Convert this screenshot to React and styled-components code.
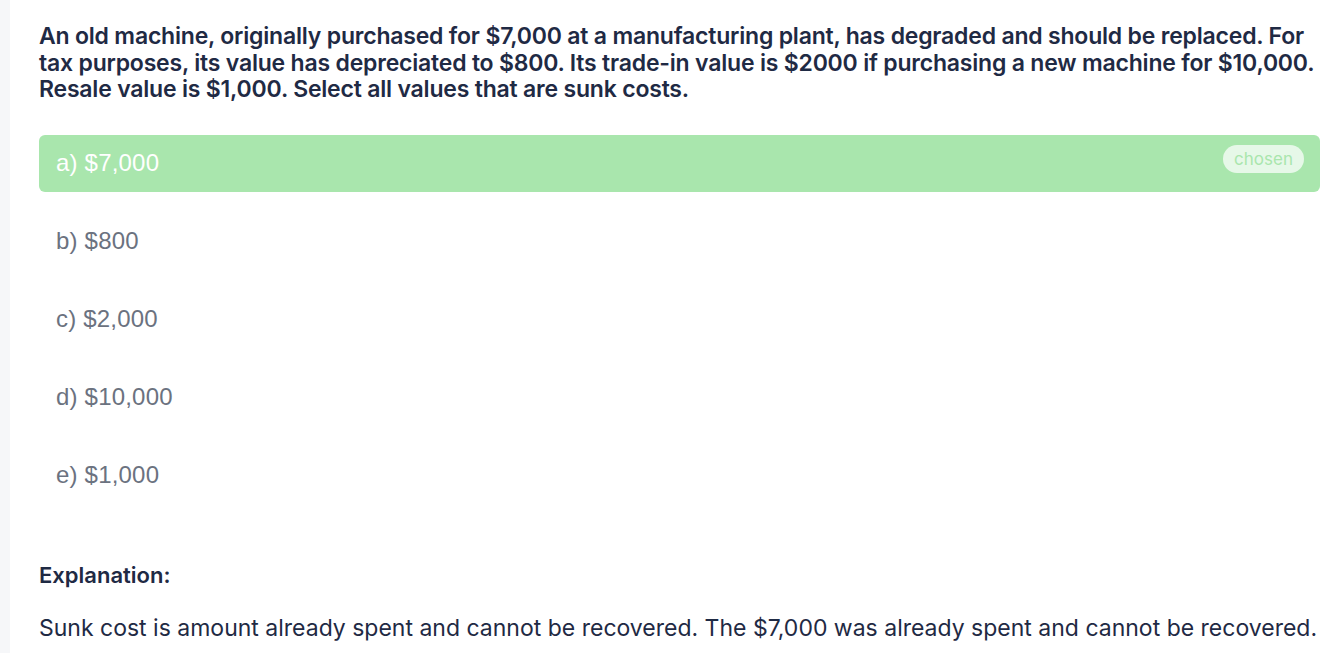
import React from "react";
import styled, { createGlobalStyle } from "styled-components";

const GlobalStyle = createGlobalStyle`
  html, body {
    margin: 0;
    padding: 0;
    background: #ffffff;
  }
  * {
    box-sizing: border-box;
  }
`;

const options = [
  { label: "a) $7,000", chosen: true },
  { label: "b) $800" },
  { label: "c) $2,000" },
  { label: "d) $10,000" },
  { label: "e) $1,000" },
];

export default function App() {
  return (
    <>
      <GlobalStyle />
      <Page>
        <Strip />
        <Content>
          <Question>
            An old machine, originally purchased for $7,000 at a manufacturing
            plant, has degraded and should be replaced. For tax purposes, its
            value has depreciated to $800. Its trade-in value is $2000 if
            purchasing a new machine for $10,000. Resale value is $1,000.
            Select all values that are sunk costs.
          </Question>
          <OptionList>
            {options.map((o) => (
              <Option key={o.label} $chosen={o.chosen}>
                <span>{o.label}</span>
                {o.chosen && <Badge>chosen</Badge>}
              </Option>
            ))}
          </OptionList>
          <ExplanationTitle>Explanation:</ExplanationTitle>
          <ExplanationText>
            Sunk cost is amount already spent and cannot be recovered. The
            $7,000 was already spent and cannot be recovered.
          </ExplanationText>
        </Content>
      </Page>
    </>
  );
}

const Page = styled.div`
  display: flex;
  min-height: 653px;
  width: 1334px;
`;

const Strip = styled.div`
  width: 10px;
  flex-shrink: 0;
  background: #f6f7f9;
`;

const Content = styled.div`
  flex: 1;
  padding: 23px 14px 0 29px;
`;

const Question = styled.p`
  margin: 0;
  font-family: Inter, "Open Sans", sans-serif;
  font-weight: 600;
  font-size: 23px;
  line-height: 26.5px;
  letter-spacing: -0.2px;
  color: #1f2a44;
`;

const OptionList = styled.div`
  display: flex;
  flex-direction: column;
  gap: 21px;
  margin-top: 32px;
`;

const Option = styled.div`
  display: flex;
  align-items: center;
  justify-content: space-between;
  height: 57px;
  padding: 0 16px 0 17px;
  border-radius: 6px;
  background: ${(p) => (p.$chosen ? "#a9e6ad" : "transparent")};
  color: ${(p) => (p.$chosen ? "#ffffff" : "#6b7280")};
  font-family: "Liberation Sans", Arial, sans-serif;
  font-size: 24px;
  letter-spacing: 0.2px;
`;

const Badge = styled.span`
  display: inline-flex;
  align-items: center;
  height: 28px;
  padding: 0 11px;
  margin-top: -8px;
  border-radius: 14px;
  background: #e6f8e8;
  color: #a9e6ad;
  font-family: Inter, sans-serif;
  font-size: 17px;
  letter-spacing: 0;
`;

const ExplanationTitle = styled.h3`
  margin: 56px 0 0;
  font-family: Inter, sans-serif;
  font-weight: 600;
  font-size: 22px;
  line-height: 30px;
  color: #1f2a44;
`;

const ExplanationText = styled.p`
  margin: 23px 0 0;
  font-family: Inter, sans-serif;
  font-weight: 400;
  font-size: 23px;
  line-height: 30px;
  color: #1f2a44;
`;
